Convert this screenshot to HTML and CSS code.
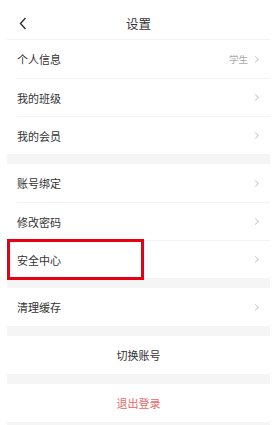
FILE: index.html
```html
<!DOCTYPE html>
<html lang="zh-CN">

<head>
    <meta charset="UTF-8">
    <meta name="viewport" content="width=device-width, initial-scale=1.0">
    <title>设置</title>
    <link rel="stylesheet" href="styles.css">
</head>

<body>

    <div class="page">
        <header class="header">
            <a href="#" class="back">
                <svg width="8" height="13" viewBox="0 0 8 13">
                    <path d="M6.5 1 L1.5 6.5 L6.5 12" fill="none" stroke="#333" stroke-width="1.4" />
                </svg>
            </a>
            <div class="title">设置</div>
            <div></div>
        </header>

        <div class="group">
            <div class="row">
                <span class="label">个人信息</span>
                <span class="value">学生</span>
                <span class="arrow"></span>
            </div>
            <div class="row">
                <span class="label">我的班级</span>
                <span class="arrow"></span>
            </div>
            <div class="row">
                <span class="label">我的会员</span>
                <span class="arrow"></span>
            </div>
        </div>

        <div class="gap"></div>

        <div class="group">
            <div class="row">
                <span class="label">账号绑定</span>
                <span class="arrow"></span>
            </div>
            <div class="row">
                <span class="label">修改密码</span>
                <span class="arrow"></span>
            </div>
            <div class="row marked">
                <span class="label">安全中心</span>
                <span class="arrow"></span>
                <!-- 红框标注 -->
                <div class="highlight"></div>
            </div>
        </div>

        <div class="gap"></div>

        <div class="group">
            <div class="row">
                <span class="label">清理缓存</span>
                <span class="arrow"></span>
            </div>
        </div>

        <div class="gap"></div>

        <div class="btn">切换账号</div>

        <div class="gap"></div>

        <div class="btn logout">退出登录</div>

        <div class="gap"></div>
    </div>

</body>

</html>
```

FILE: styles.css
```css
* {
    margin: 0;
    padding: 0;
    box-sizing: border-box;
}

body {
    font-family: "Noto Sans CJK SC", "Noto Sans", sans-serif;
    background-color: #fff;
    color: #333;
    font-size: 11px;
}

.page {
    margin: 0 3px 0 7px;
}

.header {
    height: 40px;
    padding-top: 8px;
    display: grid;
    grid-template-columns: 40px 1fr 40px;
    align-items: center;
    border-bottom: 1px solid #f3f3f3;
}

.header .back {
    display: flex;
    align-items: center;
    padding-left: 12px;
}

.header .title {
    text-align: center;
    font-size: 12.5px;
    color: #333;
}

.group {
    padding-left: 10px;
}

.row {
    position: relative;
    height: 38px;
    display: flex;
    align-items: center;
    padding-right: 11px;
}

.row + .row {
    border-top: 1px solid #f3f3f3;
}

.row .label {
    flex: 1;
}

.row .value {
    font-size: 9.5px;
    color: #aaa;
    margin-right: 5px;
}

.arrow {
    width: 5px;
    height: 5px;
    border-top: 1px solid #cdcdcd;
    border-right: 1px solid #cdcdcd;
    transform: rotate(45deg);
    margin-right: 1px;
}

.highlight {
    position: absolute;
    left: -10px;
    top: -2px;
    width: 137px;
    height: 41px;
    border: 3px solid #e60012;
}

.gap {
    height: 10px;
    background-color: #f5f5f5;
}

.btn {
    height: 38px;
    display: flex;
    align-items: center;
    justify-content: center;
    color: #333;
}

.btn.logout {
    color: #e86a6a;
}
```
